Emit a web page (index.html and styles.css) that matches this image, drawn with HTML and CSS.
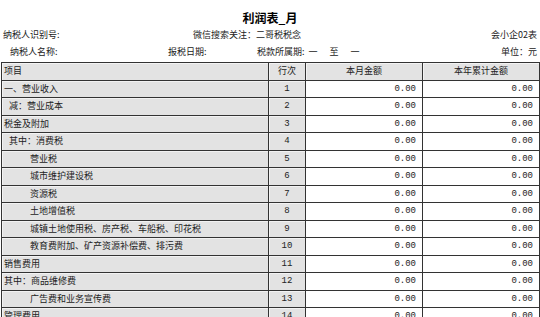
FILE: index.html
```html
<!DOCTYPE html>
<html lang="zh">
<head>
<meta charset="utf-8">
<link rel="stylesheet" href="styles.css">
</head>
<body>
<div class="page">
  <h1 class="title">利润表_月</h1>
  <div class="meta meta-1">
    <span class="m-id">纳税人识别号:</span>
    <span class="m-wx">微信搜索关注：二哥税税念</span>
    <span class="m-right">会小企02表</span>
  </div>
  <div class="meta meta-2">
    <span class="m-name">纳税人名称:</span>
    <span class="m-date">报税日期:</span>
    <span class="m-period">税款所属期: <span class="gap">一</span><span class="gap">至</span><span class="gap">一</span></span>
    <span class="m-right">单位：元</span>
  </div>
  <table class="sheet">
    <colgroup>
      <col class="c-item"><col class="c-no"><col class="c-amt"><col class="c-amt2">
    </colgroup>
    <thead>
      <tr><th class="lbl left">项目</th><th class="lbl">行次</th><th class="lbl">本月金额</th><th class="lbl">本年累计金额</th></tr>
    </thead>
    <tbody>
      <tr><td class="lbl left">一、营业收入</td><td class="lbl no">1</td><td class="amt">0.00</td><td class="amt">0.00</td></tr>
      <tr><td class="lbl left i1">减：营业成本</td><td class="lbl no">2</td><td class="amt">0.00</td><td class="amt">0.00</td></tr>
      <tr><td class="lbl left">税金及附加</td><td class="lbl no">3</td><td class="amt">0.00</td><td class="amt">0.00</td></tr>
      <tr><td class="lbl left i1">其中：消费税</td><td class="lbl no">4</td><td class="amt">0.00</td><td class="amt">0.00</td></tr>
      <tr><td class="lbl left i2">营业税</td><td class="lbl no">5</td><td class="amt">0.00</td><td class="amt">0.00</td></tr>
      <tr><td class="lbl left i2">城市维护建设税</td><td class="lbl no">6</td><td class="amt">0.00</td><td class="amt">0.00</td></tr>
      <tr><td class="lbl left i2">资源税</td><td class="lbl no">7</td><td class="amt">0.00</td><td class="amt">0.00</td></tr>
      <tr><td class="lbl left i2">土地增值税</td><td class="lbl no">8</td><td class="amt">0.00</td><td class="amt">0.00</td></tr>
      <tr><td class="lbl left i2">城镇土地使用税、房产税、车船税、印花税</td><td class="lbl no">9</td><td class="amt">0.00</td><td class="amt">0.00</td></tr>
      <tr><td class="lbl left i2">教育费附加、矿产资源补偿费、排污费</td><td class="lbl no">10</td><td class="amt">0.00</td><td class="amt">0.00</td></tr>
      <tr><td class="lbl left">销售费用</td><td class="lbl no">11</td><td class="amt">0.00</td><td class="amt">0.00</td></tr>
      <tr><td class="lbl left">其中：商品维修费</td><td class="lbl no">12</td><td class="amt">0.00</td><td class="amt">0.00</td></tr>
      <tr><td class="lbl left i2">广告费和业务宣传费</td><td class="lbl no">13</td><td class="amt">0.00</td><td class="amt">0.00</td></tr>
      <tr><td class="lbl left">管理费用</td><td class="lbl no">14</td><td class="amt">0.00</td><td class="amt">0.00</td></tr>
    </tbody>
  </table>
</div>
</body>
</html>
```

FILE: styles.css
```css
html, body {
  margin: 0;
  padding: 0;
  background: #ffffff;
}
body {
  font-family: "Noto Sans CJK SC", "Noto Sans", sans-serif;
  font-size: 9px;
  color: #222;
  overflow: hidden;
}
.page {
  width: 540px;
}
.title {
  margin: 0;
  padding-top: 9px;
  height: 17px;
  line-height: 17px;
  text-align: center;
  font-size: 12px;
  font-weight: bold;
  color: #000;
}
.meta {
  display: flex;
  align-items: center;
  height: 17px;
  line-height: 17px;
  white-space: nowrap;
}
.meta-1 {
  padding: 0 3px 0 3px;
}
.m-id {
  width: 190px;
}
.m-right {
  margin-left: auto;
}
.meta-2 {
  padding: 0 3px 0 10px;
}
.m-name {
  width: 158px;
}
.m-date {
  width: 89px;
}
.gap {
  margin-left: 2px;
  margin-right: 10px;
}
.gap:last-child {
  margin-right: 0;
}
.sheet {
  margin: 2px 0 0 1px;
  width: 538px;
  table-layout: fixed;
  border-collapse: collapse;
  border: 1px solid #2a2a2a;
}
.c-item { width: 267px; }
.c-no { width: 37px; }
.c-amt { width: 117px; }
.c-amt2 { width: 117px; }
.sheet th,
.sheet td {
  height: 16.5px;
  padding: 0;
  border: 1px solid #333;
  font-weight: normal;
  font-size: 9px;
  line-height: 16px;
  white-space: nowrap;
  overflow: hidden;
}
.sheet th {
  text-align: center;
}
.lbl {
  background: #e3e3e3;
  box-shadow: inset 1px 1px 0 #f3f3f3;
}
.left {
  text-align: left !important;
  padding-left: 2px !important;
}
.i1 { padding-left: 7px !important; }
.i2 { padding-left: 28px !important; }
.no {
  text-align: center;
  font-family: "Liberation Mono", "DejaVu Sans Mono", monospace;
  font-size: 7.5px;
}
.amt {
  background: #ffffff;
  text-align: right;
  padding-right: 6px !important;
  font-family: "Liberation Mono", "DejaVu Sans Mono", monospace;
  font-size: 7px;
}
```
